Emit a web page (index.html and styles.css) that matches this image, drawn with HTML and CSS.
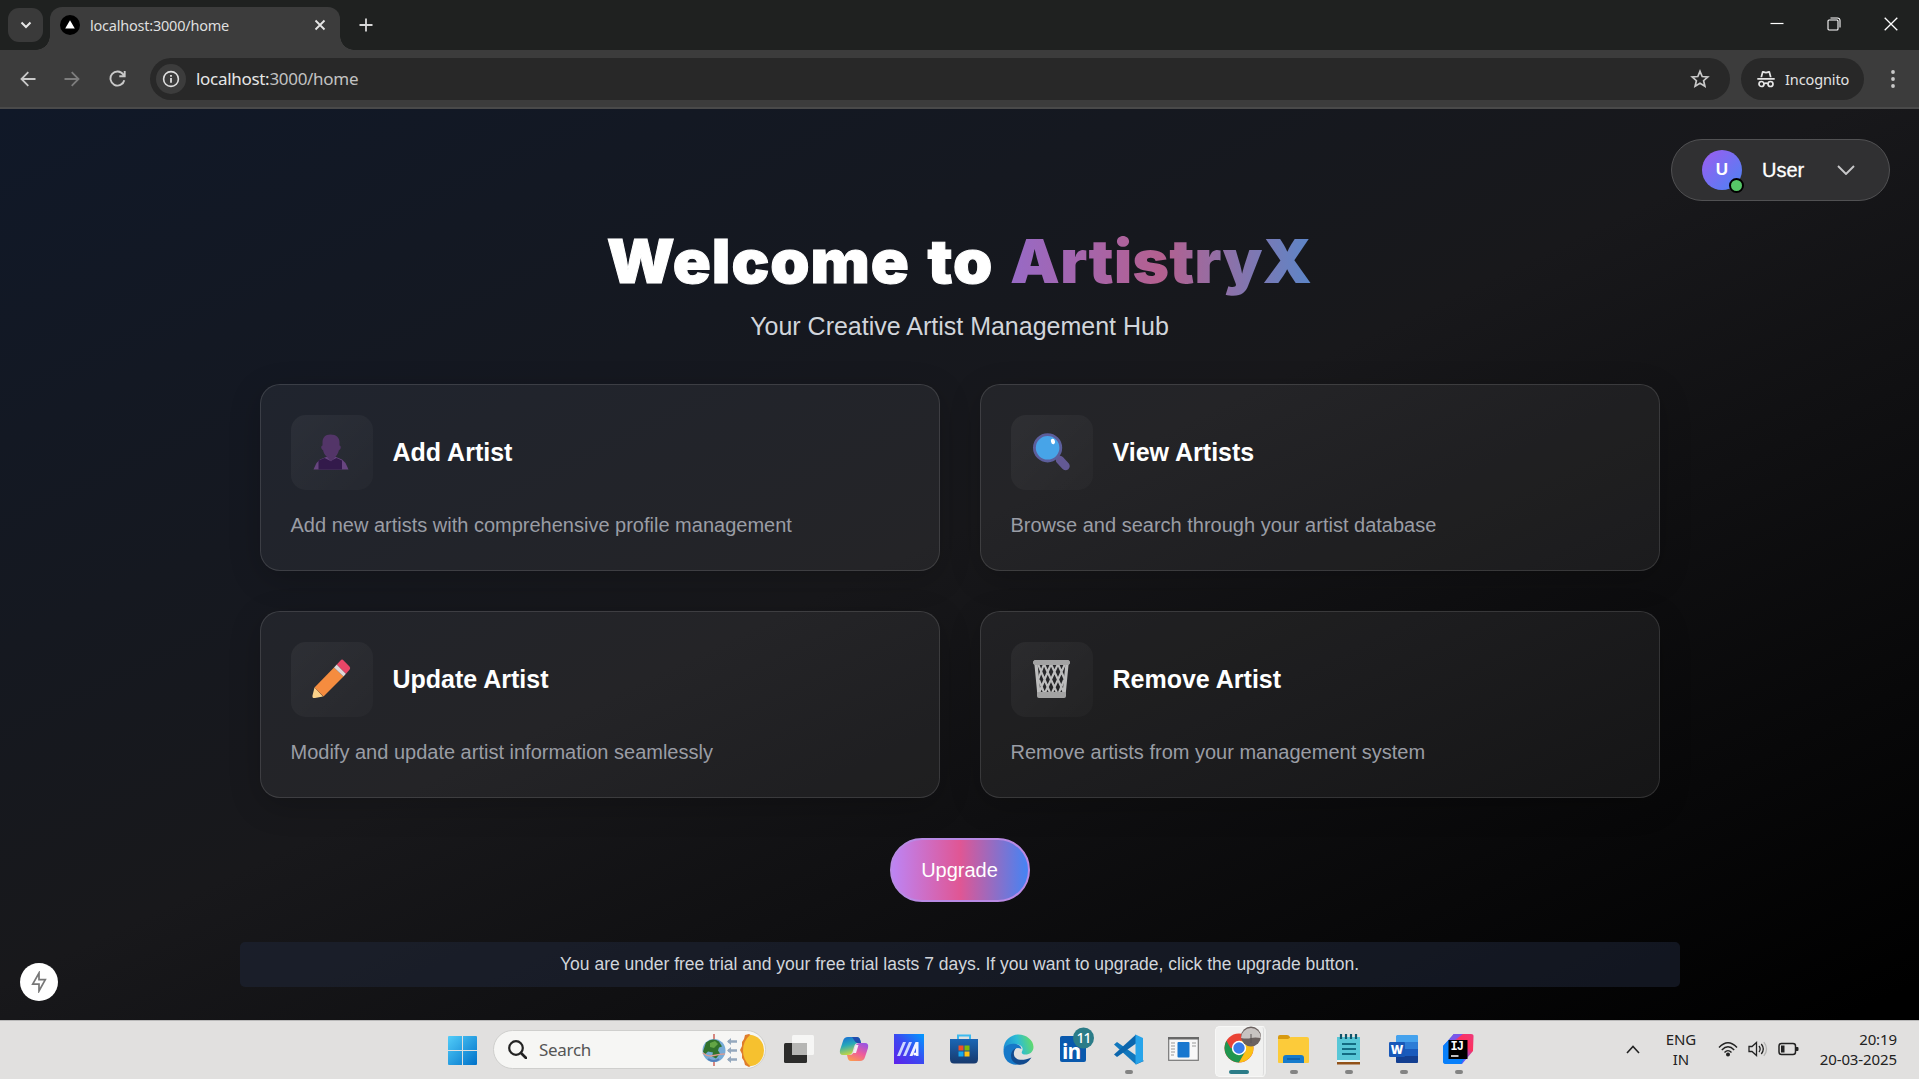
FILE: index.html
```html
<!DOCTYPE html>
<html lang="en">
<head>
<meta charset="utf-8">
<title>localhost:3000/home</title>
<link rel="stylesheet" href="styles.css">
</head>
<body>
<header class="tabstrip">
  <button class="tab-search"><svg width="12" height="8" viewBox="0 0 12 8"><path d="M1.500 1.500 6 6l4.500-4.500" fill="none" stroke="#e6e6e6" stroke-width="2"/></svg></button>
  <div class="tab">
    <svg class="favicon" width="20" height="20" viewBox="0 0 20 20"><circle cx="10" cy="10" r="10" fill="#000"/><path d="M10 5.300 14.800 13.600H5.200z" fill="#fff"/></svg>
    <span class="tab-title">localhost:3000/home</span>
    <svg class="tab-close" width="12" height="12" viewBox="0 0 12 12"><path d="M1.500 1.500l9 9M10.500 1.500l-9 9" stroke="#e6e6e6" stroke-width="1.800"/></svg>
  </div>
  <svg class="tab-new" width="14" height="14" viewBox="0 0 14 14"><path d="M7 .5v13M.5 7h13" stroke="#d8d8d8" stroke-width="1.800"/></svg>
  <div class="window-controls">
    <svg width="14" height="14" viewBox="0 0 14 14"><path d="M.5 6.500h13" stroke="#fff" stroke-width="1.200"/></svg>
    <svg width="14" height="14" viewBox="0 0 14 14" fill="none" stroke="#fff" stroke-width="1.100"><rect x="1" y="3" width="10" height="10" rx="1"/><path d="M3.500 1h7a2.500 2.500 0 0 1 2.500 2.500v7"/></svg>
    <svg width="14" height="14" viewBox="0 0 14 14"><path d="M.7.7l12.600 12.600M13.300.7L.7 13.300" stroke="#fff" stroke-width="1.300"/></svg>
  </div>
</header>
<nav class="toolbar">
  <svg class="nav-back" width="16" height="16" viewBox="0 0 16 16" fill="none" stroke="#c9c9c9" stroke-width="1.800"><path d="M15.500 8H2M8.300 1.200 1.500 8l6.800 6.800"/></svg>
  <svg class="nav-forward" width="16" height="16" viewBox="0 0 16 16" fill="none" stroke="#7d7d7d" stroke-width="1.800"><path d="M.5 8H14M7.700 1.200 14.500 8l-6.800 6.800"/></svg>
  <svg class="nav-reload" width="17" height="17" viewBox="0 0 17 17" fill="none" stroke="#c9c9c9" stroke-width="1.900"><path d="M15.300 10.200A7 7 0 1 1 14.200 4.500L15.600 6.200M15.700 1v5.300h-5.400"/></svg>
  <div class="omnibox">
    <span class="site-info"><svg width="18" height="18" viewBox="0 0 18 18"><circle cx="9" cy="9" r="7.400" fill="none" stroke="#dedede" stroke-width="1.600"/><path d="M9 8v4.800M9 5v1.800" stroke="#dedede" stroke-width="1.800"/></svg></span>
    <span class="url"><b>localhost:</b>3000/home</span>
    <svg class="star" width="20" height="20" viewBox="0 0 20 20"><path d="M10 2.300l2.200 5.200 5.600.5-4.200 3.700 1.300 5.500L10 14.300l-4.900 2.900 1.300-5.500L2.200 8l5.600-.5z" fill="none" stroke="#c9c9c9" stroke-width="1.700"/></svg>
  </div>
  <div class="incognito">
    <svg width="18" height="18" viewBox="0 0 18 18"><path d="M.3 8h17.400v1.700H.3zM3.400 7.200 4.900 1.600Q5.200.6 6.300 1L9 1.700 11.700 1q1.100-.4 1.400.6l1.500 5.600H12.800L11.700 2.900 9 3.600 6.300 2.900 5.200 7.200z" fill="#e6e6e6"/><g fill="none" stroke="#e6e6e6" stroke-width="1.700"><circle cx="4.500" cy="14" r="2.500"/><circle cx="13.500" cy="14" r="2.500"/><path d="M7 13.700q2-1.200 4 0"/></g></svg>
    <span>Incognito</span>
  </div>
  <svg class="menu" width="4" height="18" viewBox="0 0 4 18" fill="#c9c9c9"><circle cx="2" cy="2" r="1.900"/><circle cx="2" cy="9" r="1.900"/><circle cx="2" cy="16" r="1.900"/></svg>
</nav>

<main class="page">
  <div class="user-row">
    <div class="user-menu">
      <span class="avatar">U<i class="status"></i></span>
      <span class="user-name">User</span>
      <svg width="18" height="10" viewBox="0 0 18 10"><path d="M1 1l8 8 8-8" fill="none" stroke="#c8c8ca" stroke-width="1.900"/></svg>
    </div>
  </div>
  <section class="container">
    <h1 class="hero"><span class="hero-lead">Welcome to</span> <span class="brand">ArtistryX</span></h1>
    <p class="subtitle">Your Creative Artist Management Hub</p>
    <div class="cards">
      <article class="card">
        <div class="card-head">
          <svg class="card-icon" viewBox="0 0 82 75"><path d="M22.500 54.500 25.500 48 29 44.500 35 42h10l6 2.500 3.500 3.500 3 6.500z" fill="#67457f"/><path d="M27.500 54.500V45.500l6-2.500 6 3 6-3 5.500 2.500v9z" fill="#331a4b"/><path d="M39.500 19.500c6 0 9 3.500 9 8v3c2 0 1.500 4.500-.5 4.500-1 4-3 6-4 7.500l-4 4-4-4.500c-2-2-3.500-4-4-7-2-.5-2.500-4.500-.5-4.500v-3c0-4.500 2.500-8 8-8z" fill="#533568"/></svg>
          <h2>Add Artist</h2>
        </div>
        <p>Add new artists with comprehensive profile management</p>
      </article>
      <article class="card">
        <div class="card-head">
          <svg class="card-icon" viewBox="0 0 82 75"><path d="M49 45l5.500 6" stroke="#635994" stroke-width="8.500" stroke-linecap="round"/><circle cx="36.600" cy="32.800" r="13.200" fill="#47a4e8" stroke="#5c5e9b" stroke-width="2.800"/><ellipse cx="42" cy="26.500" rx="2" ry="2.800" fill="#fff" transform="rotate(-15 42 26.500)"/></svg>
          <h2>View Artists</h2>
        </div>
        <p>Browse and search through your artist database</p>
      </article>
      <article class="card">
        <div class="card-head">
          <svg class="card-icon" viewBox="0 0 82 75"><path d="M23.500 45.500 32 54.500 24 56q-3 .5-2.500-2.500z" fill="#fbd28a"/><path d="M23.500 45.500 43 25.500 52.500 34.500 32.500 54.500 28.500 50.500z" fill="#f58c3f"/><path d="M43 25.500 45.800 22.500 55 31.700 52.500 34.500z" fill="#dfd8d8"/><path d="M45.800 22.500 49.500 18.500Q51 16.800 52.600 18.400L58.500 24.500Q60 26 58.500 27.800L55 31.700z" fill="#e94667"/></svg>
          <h2>Update Artist</h2>
        </div>
        <p>Modify and update artist information seamlessly</p>
      </article>
      <article class="card">
        <div class="card-head">
          <svg class="card-icon" viewBox="0 0 82 75" fill="none" stroke="#bdbdbd"><path d="M25 22l3 31M56 22l-3 31" stroke-width="3.200"/><path d="M27 22 40 53M33 22 47 53M40 22 53 51M47 22 54 38M54 22 40 53M47 22 33 53M40 22 28 51M33 22 27 38M28 38l6 15M53 38l-6 15" stroke-width="2.100"/><rect x="22.500" y="18.500" width="36" height="4" rx="1.500" fill="#a3a3a3" stroke="#a3a3a3"/><rect x="26.500" y="50.500" width="28" height="5" rx="1" fill="#a3a3a3" stroke="#a3a3a3"/></svg>
          <h2>Remove Artist</h2>
        </div>
        <p>Remove artists from your management system</p>
      </article>
    </div>
    <button class="upgrade">Upgrade</button>
    <p class="trial">You are under free trial and your free trial lasts 7 days. If you want to upgrade, click the upgrade button.</p>
  </section>
  <button class="dev-badge"><svg width="16" height="22" viewBox="0 0 16 22"><path d="M8 2v6.700h6.300L8 20v-6.800H1.700z" fill="none" stroke="#777" stroke-width="1.700"/></svg></button>
</main>

<footer class="taskbar">
  <svg class="start" width="29" height="29" viewBox="0 0 29 29"><defs><linearGradient id="win" x2="1" y2="1"><stop stop-color="#52cdf9"/><stop offset="1" stop-color="#0071c9"/></linearGradient></defs><path d="M1 0h13v14H0V1q0-1 1-1zM15 0h13q1 0 1 1v13H15zM0 15h14v14H1q-1 0-1-1zM15 15h14v13q0 1-1 1H15z" fill="url(#win)"/></svg>
  <div class="search">
    <svg width="19" height="19" viewBox="0 0 19 19"><circle cx="8" cy="8" r="6.800" fill="none" stroke="#222" stroke-width="2.200"/><path d="M13 13l5 5" stroke="#222" stroke-width="2.600" stroke-linecap="round"/></svg>
    <span>Search</span>
    <svg class="equinox" width="62" height="34" viewBox="0 0 62 34"><path d="M12 1v32" stroke="#c95a50" stroke-width="1.400"/><circle cx="12" cy="17.500" r="11.500" fill="#76abd6"/><path d="M4 9.500q7-5.500 13-1l3 5-3 1-1 3 2 3-4 5-4-2 1-4-5-1-3 3-2-3z" fill="#31722c"/><path d="M8 10l5-2 3 3-4 4-4-1z" fill="#63a545"/><path d="M.8 20q5 4 11 2.500t11-1.500" fill="none" stroke="#dd9b91" stroke-width="1.500"/><path d="M6 26q6 4 11 0" stroke="#537fba" stroke-width="2" fill="none"/><path d="M26 8.500h9M26 17.500h9M26 26.500h9" stroke="#94a8bd" stroke-width="2.400"/><path d="M29 5v7l-4-3.500zM29 14v7l-4-3.500zM29 23v7l-4-3.500z" fill="#94a8bd"/><path d="M47 1l-4 1-1 4-2 3 0 4-2 4 2 4 0 4 2 3 1 4 4 2 5-3V4z" fill="#df7d2b"/><path d="M48 2a14 15.500 0 0 1 0 31q-7-6-7-15.500T48 2z" fill="#f6c12f"/></svg>
  </div>
  <div class="apps">
    <div class="app"><svg width="32" height="32" viewBox="0 0 32 32"><rect x="1" y="10" width="23" height="20" rx="1.500" fill="#2c2c2b"/><rect x="9" y="2" width="22" height="20" rx="1.500" fill="#f6f6f5"/><path d="M9 10h15v12H9z" fill="#b6b6b4"/></svg></div>
    <div class="app"><svg width="30" height="28" viewBox="0 0 30 28"><defs><linearGradient id="cp1" x2="0.300" y2="1"><stop stop-color="#1667d8"/><stop offset=".5" stop-color="#27a8b9"/><stop offset="1" stop-color="#c3d643"/></linearGradient><linearGradient id="cp2" x1=".7" x2=".2" y2="1"><stop stop-color="#9d54df"/><stop offset=".5" stop-color="#ef5c9b"/><stop offset="1" stop-color="#fb9b4e"/></linearGradient></defs><path d="M9 2h9q3 0 3.500 4l.5 2h-3q-3 0-4 4l-1.500 5Q12.500 20 9 20H4q-4 0-3-5L4 6q1-4 5-4z" fill="url(#cp1)"/><path d="M18 2q3 0 4 6h-4q-2-1-3-3t-2-3z" fill="#214cad"/><path d="M21 26h-9q-3 0-3.500-4L8 20h3q3 0 4-4l1.500-5Q17.500 8 21 8h5q4 0 3 5l-3 9q-1 4-5 4z" fill="url(#cp2)"/><path d="M14 18l2.500-8h3L17 18z" fill="#f3edf3"/></svg></div>
    <div class="app"><svg width="30" height="30" viewBox="0 0 30 30"><defs><linearGradient id="ma" x1="1" x2="0" y2="1"><stop stop-color="#009bff"/><stop offset=".5" stop-color="#3b49f1"/><stop offset="1" stop-color="#5f21ea"/></linearGradient></defs><path d="M0 0h30v30H0z" fill="url(#ma)"/><path d="M3 22 9 8h3L6 22zM9 22l6-14h3l-6 14z" fill="#ccd8ff"/><path d="M15.500 22l6-14h3v14H22V14l-3.500 8z" fill="#eff2ff"/><circle cx="21" cy="20" r="1.600" fill="#fff"/></svg></div>
    <div class="app"><svg width="30" height="32" viewBox="0 0 30 32"><defs><linearGradient id="store" x2="0" y2="1"><stop stop-color="#1b67b5"/><stop offset="1" stop-color="#17396d"/></linearGradient></defs><path d="M9 7V2.500h12V7" fill="none" stroke="#3dbaf0" stroke-width="2"/><path d="M1 6h28v20q0 4.500-4 4.500H5q-4 0-4-4.500z" fill="url(#store)"/><path d="M9.500 12.500h5v5h-5z" fill="#f05125"/><path d="M15.500 12.500h5v5h-5z" fill="#80bb08"/><path d="M9.500 18.500h5v5h-5z" fill="#15a9ef"/><path d="M15.500 18.500h5v5h-5z" fill="#ffc212"/></svg></div>
    <div class="app"><svg width="31" height="31" viewBox="0 0 31 31"><defs><linearGradient id="edge1" y1=".6" x2="1" y2=".4"><stop stop-color="#1d8bd4"/><stop offset=".5" stop-color="#2cbcd5"/><stop offset="1" stop-color="#65dc65"/></linearGradient></defs><path d="M.5 16C.5 6 8 .5 15.500.5S30.500 6 30.500 13c0 5-4 7.500-8 7.500-3 0-4.500-1.500-3.500-3 2-4-1-7-5.500-7C8 10.500 3 13 .5 16z" fill="url(#edge1)"/><path d="M.5 17C1 12 7 8.500 13 10q5 1 5.500 5-7-3-8 4-1 9 9 10.500Q10 32.500 4.500 27.500.5 23.500.5 17z" fill="#1678c8"/><path d="M13 14q-3 3-2 7c1 5 8 6.500 17.500 2.500Q23 32 15 30.500 7.500 28 8 21q.5-5 5-7z" fill="#124b8f"/></svg></div>
    <div class="app"><svg class="linkedin" width="36" height="38" viewBox="0 0 36 38"><rect x="1" y="10" width="26" height="26" rx="2" fill="#0a59ad"/><text x="3" y="33" class="ico-in">in</text><circle cx="24.500" cy="12" r="10.500" fill="#2b7c88"/><text x="24.500" y="17" class="ico-badge">11</text></svg></div>
    <div class="app run"><svg width="31" height="31" viewBox="0 0 31 31"><path d="M1 10.500 4 8l27 19-8 3.500z" fill="#1177bd"/><path d="M1 20.500 4 23 23 9.500V.5z" fill="#0b66ad"/><path d="M22.500.5 30 4v23l-7.500 3.500V.5z" fill="#27a4ea"/></svg></div>
    <div class="app"><svg width="31" height="24" viewBox="0 0 31 24"><rect x=".7" y=".7" width="29.600" height="22.600" fill="#f8f8f8" stroke="#777" stroke-width="1.200"/><path d="M0 0h31v2.500H0z" fill="#686868"/><path d="M3 6h4M3 9h4M3 12h4M3 15h4M3 18h3M24 6h4M24 9h4" stroke="#999"/><rect x="9.500" y="5" width="12" height="15.500" rx="1" fill="#1877cf"/></svg></div>
    <div class="app active"><svg width="40" height="40" viewBox="0 0 40 40"><circle cx="18" cy="23" r="14.500" fill="#ea4335"/><path d="M5.400 15.800A14.500 14.500 0 0 0 18 37.500l6.300-10.900L18 23h-8.400z" fill="#20964f"/><path d="M18 37.500a14.500 14.500 0 0 0 12.600-21.700H18l6.300 10.800z" fill="#fbc116"/><circle cx="18" cy="23" r="7.200" fill="#fff"/><circle cx="18" cy="23" r="5.700" fill="#397de9"/><circle cx="30" cy="11.500" r="10" fill="#6b615f"/><path d="M20 13a10 10 0 1 1 20 0q-6-1-10 0t-10 0z" fill="#c8c3c1"/><path d="M30 9v9" stroke="#5b5455" stroke-width="1"/></svg></div>
    <div class="app run"><svg width="31" height="30" viewBox="0 0 31 30"><path d="M0 3q0-2 2-2h7q2 0 3 2l2 3H0z" fill="#d89a10"/><path d="M0 5h10l3-2h16q2 0 2 2v23q0 1-1 1H1q-1 0-1-1z" fill="#fccb3a"/><path d="M5 29v-5q0-3 3-3h15q3 0 3 3v5z" fill="#167bcc"/><path d="M9 25h13" stroke="#0b5aa5" stroke-width="1.500"/></svg></div>
    <div class="app run"><svg width="23" height="32" viewBox="0 0 23 32"><path d="M0 4h23v25H0z" fill="#58c7d7"/><path d="M0 27h23v2H0z" fill="#eef5f4"/><path d="M0 29h23v2.500H0z" fill="#925219"/><path d="M5 11h14M5 16h14M5 21h14" stroke="#136b82" stroke-width="1.800"/><path d="M4 1v5M9 1v5M14 1v5M19 1v5" stroke="#10566c" stroke-width="2.200"/></svg></div>
    <div class="app run"><svg width="30" height="30" viewBox="0 0 30 30"><path d="M8 1h20q1 0 1 1v6H7V2z" fill="#45a2ed"/><path d="M7 8h22v7H7z" fill="#2c7cd6"/><path d="M7 15h22v7H7z" fill="#195abc"/><path d="M7 22h22v6q0 1-1 1H8q-1 0-1-1z" fill="#133f91"/><rect y="8" width="16" height="15" rx="1.300" fill="#1858b8"/><text x="8" y="20" class="ico-word">W</text></svg></div>
    <div class="app run"><svg width="31" height="32" viewBox="0 0 31 32"><defs><linearGradient id="ij" y1="1" x2="1" y2="0"><stop stop-color="#087cff"/><stop offset=".45" stop-color="#6b57ff"/><stop offset=".7" stop-color="#fe315d"/><stop offset="1" stop-color="#ed3a7c"/></linearGradient></defs><path d="M0 13 11 1h17q3 0 2.500 3L30 18 19 31H3q-3 0-3-3z" fill="url(#ij)"/><path d="M0 13 11 1h5L6 9v17h15l-3 5H3q-3 0-3-3z" fill="#0880fa"/><path d="M10 2l1-1h9l-8 6H6z" fill="#7a56ea"/><path d="M5.500 7h19v19h-19z"/><text x="7.500" y="16.500" class="ico-ij">IJ</text><path d="M8 23h7.500" stroke="#fff" stroke-width="1.500"/></svg></div>
  </div>
  <div class="tray">
    <svg class="up" width="14" height="9" viewBox="0 0 14 9"><path d="M1 8l6-6.500L13 8" fill="none" stroke="#222" stroke-width="1.600"/></svg>
    <div class="lang">ENG<br>IN</div>
    <svg class="wifi" width="20" height="16" viewBox="0 0 20 16" fill="none" stroke="#222" stroke-width="1.400"><path d="M1 6.500q9-9.500 18 0M3.800 9q6.200-6.500 12.400 0M6.500 11.500q3.500-3.700 7 0"/><circle cx="10" cy="13.500" r="1.300" fill="#222"/></svg>
    <svg class="volume" width="20" height="16" viewBox="0 0 20 16" fill="none" stroke="#222" stroke-width="1.300"><path d="M1 5.500h3L8.500 1.500v13L4 10.500H1zM11 5q2.300 3 0 6M13.300 3q4 5 0 10"/><path d="M15.800 1.200q5.500 6.800 0 13.600" stroke="#b5b5b3"/></svg>
    <svg class="battery" width="21" height="14" viewBox="0 0 21 14"><rect x="1" y="1.500" width="16.500" height="11" rx="2.500" fill="none" stroke="#222" stroke-width="1.500"/><path d="M3 3.500h3.500v7H3zM18 5h1.500q1 0 1 1v2q0 1-1 1H18z" fill="#222"/></svg>
    <div class="clock">20:19<br>20-03-2025</div>
  </div>
</footer>
</body>
</html>
```
FILE: styles.css
```css
* { box-sizing: border-box; }
body {
  margin: 0;
  width: 1919px;
  height: 1079px;
  overflow: hidden;
  display: flex;
  flex-direction: column;
  font-family: "Liberation Sans", Arial, sans-serif;
  background: #000;
}
button { font: inherit; border: 0; padding: 0; margin: 0; }
svg { display: block; flex: none; }
h1, h2, p { margin: 0; }

/* Browser chrome */
.tabstrip {
  height: 50px;
  flex: none;
  display: flex;
  align-items: flex-start;
  background: #1f2120;
  font-family: "Noto Sans", sans-serif;
}
.tab-search {
  width: 35px;
  height: 34px;
  margin: 8px 7px 0 8px;
  border-radius: 11px;
  background: #3a3a3a;
  display: grid;
  place-items: center;
}
.tab {
  position: relative;
  width: 290px;
  height: 43px;
  margin-top: 7px;
  padding: 0 14px 7px 10px;
  display: flex;
  align-items: center;
  border-radius: 12px 12px 0 0;
  background: #3c3c3c;
}
.tab::before, .tab::after {
  content: "";
  position: absolute;
  bottom: 0;
  width: 14px;
  height: 14px;
}
.tab::before { left: -14px; background: radial-gradient(circle at 0 0, transparent 13.500px, #3c3c3c 14px); }
.tab::after { right: -14px; background: radial-gradient(circle at 100% 0, transparent 13.500px, #3c3c3c 14px); }
.tab-title {
  flex: 1;
  margin-left: 10px;
  font-size: 14.500px;
  letter-spacing: -0.220px;
  color: #dfdfdf;
}
.tab-new { margin: 18px 0 0 19px; }
.window-controls {
  margin: 17px 21px 0 auto;
  display: flex;
  gap: 43px;
}
.toolbar {
  height: 59px;
  flex: none;
  display: flex;
  align-items: center;
  background: #3c3c3c;
  border-bottom: 2px solid #4a4a4a;
  font-family: "Noto Sans", sans-serif;
}
.nav-back { margin-left: 20px; }
.nav-forward { margin-left: 28px; }
.nav-reload { margin-left: 29px; }
.omnibox {
  width: 1580px;
  height: 42px;
  margin-left: 24px;
  padding: 0 20px 0 6px;
  border-radius: 21px;
  display: flex;
  align-items: center;
  background: #282828;
}
.site-info {
  width: 30px;
  height: 30px;
  border-radius: 50%;
  background: #3c3c3c;
  display: grid;
  place-items: center;
}
.url {
  flex: 1;
  margin-left: 10px;
  font-size: 17px;
  letter-spacing: -0.300px;
  color: #c2c2c2;
}
.url b { font-weight: 400; color: #e6e6e6; }
.incognito {
  width: 123px;
  height: 42px;
  margin-left: 11px;
  padding-left: 16px;
  border-radius: 21px;
  display: flex;
  align-items: center;
  gap: 10px;
  background: #282828;
  color: #e3e3e3;
  font-size: 14.500px;
  letter-spacing: -0.120px;
}
.menu { margin-left: 27px; }

/* Page */
.page {
  position: relative;
  height: 911px;
  flex: none;
  background: linear-gradient(to bottom right, #101828 0%, #18181b 48%, #000 98%);
}
.user-row {
  display: flex;
  justify-content: flex-end;
  padding: 30px 29px 0 0;
}
.user-menu {
  width: 219px;
  height: 62px;
  padding: 0 34px 0 30px;
  display: flex;
  align-items: center;
  border: 1px solid #515153;
  border-radius: 31px;
  background: #303032;
  color: #fff;
  font-size: 20px;
}
.avatar {
  position: relative;
  width: 40px;
  height: 40px;
  border-radius: 50%;
  display: grid;
  place-items: center;
  background: linear-gradient(135deg, #9d5cf0, #5b7cf3 80%, #5580f5);
  font-size: 17px;
  font-weight: 700;
}
.status {
  position: absolute;
  right: -2px;
  bottom: -3px;
  width: 15px;
  height: 15px;
  border: 2px solid #000;
  border-radius: 50%;
  background: #56c768;
}
.user-name {
  flex: 1;
  margin-left: 20px;
  -webkit-text-stroke: 0.300px #fff;
}
.container {
  width: 1440px;
  margin: 0 auto;
  padding: 23px 0 0;
  display: flex;
  flex-direction: column;
  align-items: center;
}
.hero {
  height: 75px;
  line-height: 75px;
  font-family: Inter, sans-serif;
  font-size: 60px;
  font-weight: 900;
  color: #fff;
  white-space: nowrap;
  word-spacing: 4px;
  transform: scaleX(1.048);
}
.hero-lead { letter-spacing: 0.900px; -webkit-text-stroke: 1px #fff; }
.brand {
  color: transparent;
  background: linear-gradient(90deg, #976ac6, #b4608f 50%, #5c86c8);
  -webkit-background-clip: text;
  background-clip: text;
}
.subtitle {
  height: 40px;
  margin-top: 7px;
  line-height: 40px;
  font-size: 25px;
  color: #d1d5db;
}
.cards {
  width: 1400px;
  margin-top: 38px;
  display: grid;
  grid-template-columns: 1fr 1fr;
  gap: 40px;
}
.card {
  height: 187px;
  padding: 30px;
  border: 1px solid rgba(255, 255, 255, 0.120);
  border-radius: 20px;
  background: rgba(255, 255, 255, 0.055);
  box-shadow: 0 8px 32px rgba(0, 0, 0, 0.200);
}
.card-head {
  display: flex;
  align-items: center;
  gap: 20px;
}
.card-icon {
  width: 82px;
  height: 75px;
  border-radius: 15px;
  background: linear-gradient(135deg, rgba(255, 255, 255, 0.050), rgba(255, 255, 255, 0.020));
}
.card h2 {
  padding-bottom: 2px;
  font-size: 25px;
  line-height: 36px;
  font-weight: 700;
  color: #fff;
}
.card p {
  margin-top: 19px;
  font-size: 20px;
  line-height: 32px;
  color: #9a9da5;
}
.upgrade {
  width: 140px;
  height: 64px;
  margin-top: 40px;
  border: 2px solid #b98ae4;
  border-radius: 32px;
  background: linear-gradient(90deg, #bd84f4, #e05694 50%, #4484f4);
  color: #fff;
  font-size: 20px;
}
.trial {
  width: 1440px;
  height: 45px;
  margin-top: 40px;
  border-radius: 5px;
  line-height: 44px;
  text-align: center;
  background: rgba(31, 38, 56, 0.550);
  color: #d1d5db;
  font-size: 17.500px;
}
.dev-badge {
  position: absolute;
  left: 20px;
  bottom: 19px;
  width: 38px;
  height: 38px;
  border-radius: 50%;
  display: grid;
  place-items: center;
  background: #fff;
}

/* Taskbar */
.taskbar {
  height: 59px;
  flex: none;
  display: flex;
  align-items: center;
  padding-bottom: 2px;
  border-top: 1px solid #b9b9b9;
  background: #e1e0df;
  font-family: "Noto Sans", sans-serif;
}
.start { margin: 2px 0 0 448px; }
.search {
  width: 273px;
  height: 39px;
  margin: 1px 0 0 16px;
  padding: 0 1px 0 14px;
  display: flex;
  align-items: center;
  border: 1px solid #cfcfcd;
  border-radius: 20px;
  background: #f6f6f4;
  color: #555;
  font-size: 17px;
  letter-spacing: -0.300px;
}
.search span { flex: 1; margin-left: 12px; }
.apps { display: flex; margin-left: 5px; height: 56px; }
.app {
  position: relative;
  width: 55px;
  height: 56px;
  display: grid;
  place-items: center;
}
.linkedin { margin: -9px 0 0 6px; }
.app.run::after, .app.active::after {
  content: "";
  position: absolute;
  left: 24px;
  bottom: 3px;
  width: 8px;
  height: 4px;
  border-radius: 2px;
  background: #838383;
}
.app.active::before {
  content: "";
  position: absolute;
  left: 4px;
  top: 5px;
  width: 47px;
  height: 49px;
  border: 1px solid #f7f7f6;
  border-right: 4px double #ddd;
  border-radius: 5px;
  background: #f1f1f0;
}
.app.active::after { left: 18px; width: 20px; background: #2b7c88; }
.app.active svg { position: relative; margin: -9px 0 0 4px; }
.ico-in { font: 700 21px "Open Sans", sans-serif; fill: #fff; letter-spacing: -1px; }
.ico-badge { font: 500 14px "Noto Sans", sans-serif; fill: #fff; text-anchor: middle; letter-spacing: -1px; }
.ico-word { font: 800 12px "Open Sans", sans-serif; fill: #fff; text-anchor: middle; }
.ico-ij { font: 700 12px "Liberation Mono", monospace; fill: #fff; letter-spacing: -1px; }
.tray {
  flex: 1;
  margin-right: 22px;
  display: flex;
  align-items: center;
  color: #222;
  font-size: 15px;
  line-height: 20px;
  letter-spacing: -0.100px;
}
.up { margin-left: 140px; }
.lang { width: 40px; margin: 0 17px 0 21px; text-align: center; }
.volume { margin-left: 10px; }
.battery { margin-left: 10px; }
.clock { margin-left: auto; text-align: right; }
```
